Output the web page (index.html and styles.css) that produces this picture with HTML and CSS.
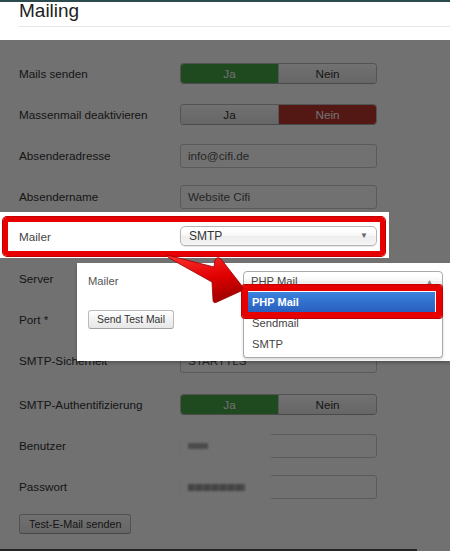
FILE: index.html
```html
<!DOCTYPE html>
<html lang="de">
<head>
    <meta charset="UTF-8">
    <meta name="viewport" content="width=device-width, initial-scale=1.0">
    <title>Mailing</title>
    <link rel="stylesheet" href="styles.css">
</head>
<body>
    <div class="topbar"></div>
    <header class="header">
        <h1>Mailing</h1>
    </header>

    <main class="form">
        <div class="row">
            <label>Mails senden</label>
            <div class="toggle">
                <span class="btn-half yes">Ja</span>
                <span class="btn-half">Nein</span>
            </div>
        </div>
        <div class="row">
            <label>Massenmail deaktivieren</label>
            <div class="toggle">
                <span class="btn-half">Ja</span>
                <span class="btn-half no">Nein</span>
            </div>
        </div>
        <div class="row">
            <label>Absenderadresse</label>
            <div class="input">info@cifi.de</div>
        </div>
        <div class="row">
            <label>Absendername</label>
            <div class="input">Website Cifi</div>
        </div>
        <div class="row highlight">
            <label>Mailer</label>
            <div class="select">SMTP<span class="caret">&#9660;</span></div>
        </div>
        <div class="row">
            <label>Server</label>
            <div class="input">smtp.cifi.de</div>
        </div>
        <div class="row">
            <label>Port *</label>
            <div class="input">587</div>
        </div>
        <div class="row">
            <label>SMTP-Sicherheit</label>
            <div class="input">STARTTLS</div>
        </div>
        <div class="row spaced">
            <label>SMTP-Authentifizierung</label>
            <div class="toggle">
                <span class="btn-half yes">Ja</span>
                <span class="btn-half">Nein</span>
            </div>
        </div>
        <div class="row">
            <label>Benutzer</label>
            <div class="input hidden-value"><span class="blur short"></span></div>
        </div>
        <div class="row">
            <label>Passwort</label>
            <div class="input hidden-value"><span class="blur long"></span></div>
        </div>
        <div class="actions">
            <button class="btn">Test-E-Mail senden</button>
        </div>
        <div class="scrollbar"></div>
    </main>

    <div class="overlay"></div>

    <div class="popup">
        <div class="popup-row">
            <span class="popup-label">Mailer</span>
            <div class="popup-select">
                PHP Mail<span class="caret up">&#9650;</span>
                <ul class="options">
                    <li class="active">PHP Mail</li>
                    <li>Sendmail</li>
                    <li>SMTP</li>
                </ul>
            </div>
        </div>
        <button class="btn small">Send Test Mail</button>
    </div>

    <svg class="arrow" width="90" height="62" viewBox="0 0 90 62">
        <defs>
            <linearGradient id="arrowFill" x1="0" y1="0" x2="0.3" y2="1">
                <stop offset="0" stop-color="#ff3030"/>
                <stop offset="0.6" stop-color="#e00000"/>
                <stop offset="1" stop-color="#a80000"/>
            </linearGradient>
        </defs>
        <path d="M7 7 L54 19 L55 12 Q57 8 61 11 L82 38 Q84 41 81 43 L57 54 Q53 56 53 52 L52 34 L9 10 Z"
              fill="url(#arrowFill)" stroke="#9a0000" stroke-width="0.8" stroke-linejoin="round"/>
    </svg>
</body>
</html>
```

FILE: styles.css
```css
body {
    margin: 0;
    width: 450px;
    height: 551px;
    position: relative;
    overflow: hidden;
    background-color: #fff;
    font-family: "Liberation Sans", Arial, sans-serif;
    color: #333;
}
.topbar {
    height: 2px;
    background-color: #2d4a4f;
}
.header {
    height: 38px;
    padding-left: 19px;
    box-sizing: border-box;
}
.header h1 {
    margin: 0;
    font-size: 19px;
    line-height: 18px;
    font-weight: normal;
    color: #222;
    padding-bottom: 6px;
    border-bottom: 1px solid #e6e6e6;
}
.form {
    height: 511px;
    box-sizing: border-box;
    padding-top: 13px;
    display: flex;
    flex-direction: column;
}
.row {
    height: 41px;
    flex-shrink: 0;
    display: flex;
    align-items: center;
    padding-left: 19px;
    font-size: 11.7px;
}
.row.spaced {
    margin-top: 3px;
}
.row label {
    width: 161px;
    flex-shrink: 0;
}
.toggle {
    width: 197px;
    height: 21px;
    display: flex;
    border: 1px solid #bbb;
    border-bottom-color: #a8a8a8;
    border-radius: 4px;
    box-sizing: border-box;
    overflow: hidden;
}
.btn-half {
    flex: 1;
    text-align: center;
    line-height: 19px;
    font-size: 11.7px;
    background: linear-gradient(#fff, #e6e6e6);
    color: #333;
}
.btn-half + .btn-half {
    border-left: 1px solid #c4c4c4;
}
.btn-half.yes {
    background: #46a546;
    color: #fff;
}
.btn-half.no {
    background: #bd362f;
    color: #fff;
}
.input {
    width: 197px;
    height: 24px;
    box-sizing: border-box;
    border: 1px solid #ccc;
    border-radius: 3px;
    padding: 0 7px;
    line-height: 22px;
    background-color: #fff;
    color: #555;
}
.hidden-value {
    position: relative;
}
.hidden-value::before {
    content: "";
    position: absolute;
    left: -2px;
    top: -5px;
    width: 92px;
    height: 32px;
    background-color: #fff;
    filter: blur(1.5px);
}
.blur {
    position: relative;
    display: inline-block;
    height: 6px;
    vertical-align: middle;
    background-color: #aaa;
    filter: blur(0.8px);
}
.blur.short {
    width: 20px;
}
.blur.long {
    width: 57px;
    height: 7px;
    background: repeating-linear-gradient(90deg, #999 0 6px, #b4b4b4 6px 8px);
}
.highlight {
    position: relative;
    z-index: 3;
    padding-bottom: 3px;
    box-sizing: border-box;
    color: #444;
}
.highlight::before {
    content: "";
    position: absolute;
    left: 0;
    top: -5px;
    width: 389px;
    height: 46px;
    background-color: #fff;
    z-index: -1;
}
.highlight::after {
    content: "";
    position: absolute;
    left: 3px;
    top: 0;
    width: 382px;
    height: 39px;
    box-sizing: border-box;
    border: 5px solid #e60000;
    border-radius: 4px;
    box-shadow: 0 0 0 1px #c00000;
}
.select {
    width: 197px;
    height: 20px;
    box-sizing: border-box;
    border: 1px solid #b5b5b5;
    border-radius: 5px;
    padding: 0 8px;
    line-height: 18px;
    font-size: 12px;
    color: #333;
    background: linear-gradient(#fff 20%, #f6f6f6 50%, #eee 52%, #f4f4f4);
    box-shadow: 0 0 2px #fff inset, 0 1px 1px rgba(0, 0, 0, 0.1);
    display: flex;
    justify-content: space-between;
}
.caret {
    font-size: 8px;
    color: #666;
}
.actions {
    padding: 7px 0 0 19px;
}
.btn {
    height: 20px;
    padding: 0 9px;
    font-family: "Liberation Sans", Arial, sans-serif;
    font-size: 10.8px;
    color: #333;
    border: 1px solid #bbb;
    border-bottom-color: #a2a2a2;
    border-radius: 3px;
    background: linear-gradient(#fff, #e6e6e6);
}
.scrollbar {
    margin-top: auto;
    width: 417px;
    height: 2px;
    background-color: #555;
}
.overlay {
    position: absolute;
    left: 0;
    right: 0;
    top: 40px;
    bottom: 0;
    background-color: rgba(0, 0, 0, 0.555);
    z-index: 2;
}
.popup {
    position: absolute;
    left: 77px;
    top: 263px;
    width: 373px;
    height: 98px;
    background-color: #fff;
    box-shadow: 0 2px 3px rgba(0, 0, 0, 0.25);
    z-index: 4;
    padding: 8px 0 0 11px;
    box-sizing: border-box;
}
.popup-row {
    display: flex;
    align-items: center;
}
.popup-label {
    width: 155px;
    font-size: 11.2px;
    color: #555;
}
.popup-select {
    position: relative;
    width: 200px;
    height: 20px;
    box-sizing: border-box;
    border: 1px solid #aaa;
    border-radius: 4px 4px 0 0;
    padding: 0 7px;
    line-height: 19px;
    font-size: 11.2px;
    color: #444;
    background: linear-gradient(#fff 20%, #f6f6f6 50%, #eee 52%, #f4f4f4);
    display: flex;
    justify-content: space-between;
}
.caret.up {
    font-size: 7px;
    color: #888;
    margin-right: 2px;
}
.options {
    position: absolute;
    left: -1px;
    top: 19px;
    width: 200px;
    height: 67px;
    box-sizing: border-box;
    margin: 0;
    padding: 1px 7px 0 4px;
    list-style: none;
    background-color: #fff;
    border: 1px solid #aaa;
    border-top: none;
    border-radius: 0 0 4px 4px;
    box-shadow: 0 2px 3px rgba(0, 0, 0, 0.15);
}
.options li {
    height: 21px;
    line-height: 21px;
    padding-left: 4px;
    font-size: 11.2px;
    color: #444;
}
.options li.active {
    position: relative;
    height: 20px;
    line-height: 20px;
    margin-bottom: 1px;
    color: #fff;
    font-weight: bold;
    font-size: 11px;
    background: linear-gradient(#3b82dd, #2a5fbf);
}
.options li.active::after {
    content: "";
    position: absolute;
    left: -6px;
    right: -7px;
    top: -7px;
    bottom: -6px;
    border: 6px solid #e60000;
    border-radius: 3px;
    box-shadow: 0 0 0 1px #c00000;
}
.btn.small {
    margin-top: 19px;
    height: 19px;
    padding: 0 8px;
    font-size: 10.4px;
}
.arrow {
    position: absolute;
    left: 160px;
    top: 248px;
    z-index: 5;
    pointer-events: none;
}
```
